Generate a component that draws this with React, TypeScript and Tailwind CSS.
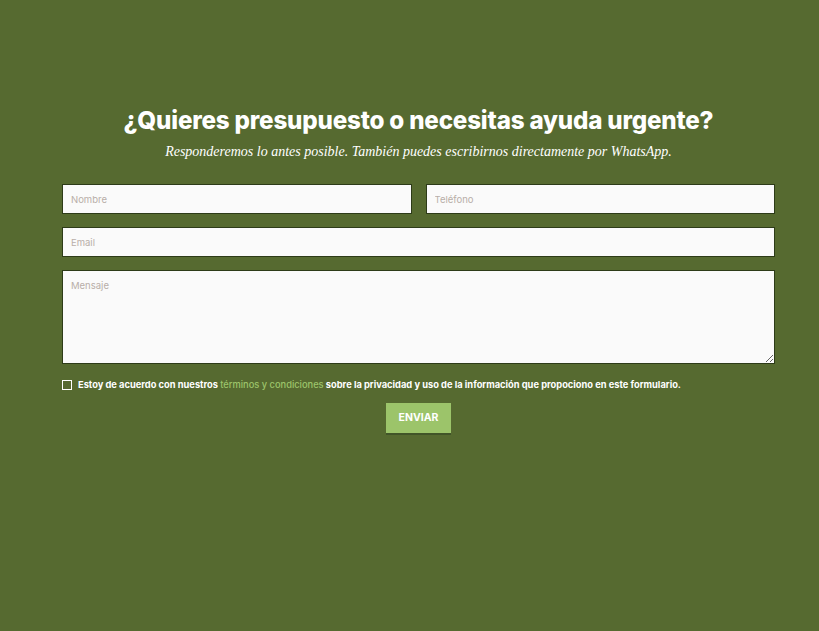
import React from 'react';

const fieldCls =
  'h-[30px] w-full border border-[#2d3b18] bg-[#fafafa] px-2 text-[9.5px] text-[#444] outline-none placeholder:text-[#b8aea8]';

export default function App() {
  return (
    <div className="min-h-[631px] w-full bg-[#566a30] font-['Inter',sans-serif]">
      <div className="ml-[62px] w-[713px] pt-[104px]">
        <h1 className="text-center text-[24.2px] font-extrabold leading-[34px] tracking-[-0.2px] text-white">
          ¿Quieres presupuesto o necesitas ayuda urgente?
        </h1>
        <p className="mt-[5px] text-center font-['Liberation_Serif',serif] text-[14px] italic leading-[18px] text-white">
          Responderemos lo antes posible. También puedes escribirnos directamente por WhatsApp.
        </p>

        <form className="mt-[23px] flex flex-col gap-[13px]">
          <div className="grid grid-cols-2 gap-[14px]">
            <input className={fieldCls} placeholder="Nombre" />
            <input className={fieldCls} placeholder="Teléfono" />
          </div>
          <input className={fieldCls} placeholder="Email" />
          <textarea
            className="h-[94px] w-full border border-[#2d3b18] bg-[#fafafa] px-2 pt-[8px] text-[9.5px] text-[#444] outline-none placeholder:text-[#b8aea8]"
            placeholder="Mensaje"
          />

          <label className="mt-[1px] flex items-center gap-[6px] text-[9.3px] font-bold text-white">
            <span className="h-[10px] w-[10px] shrink-0 border border-white" />
            <span>
              Estoy de acuerdo con nuestros{' '}
              <span className="font-medium text-[#9cc46a]">términos y condiciones</span> sobre la
              privacidad y uso de la información que propociono en este formulario.
            </span>
          </label>

          <div className="mt-[-2px] flex justify-center">
            <button
              type="button"
              className="h-[30px] w-[65px] bg-[#9cc46a] text-[10.5px] font-bold text-white shadow-[0_2px_0_rgba(40,60,30,0.45)]"
            >
              ENVIAR
            </button>
          </div>
        </form>
      </div>
    </div>
  );
}
